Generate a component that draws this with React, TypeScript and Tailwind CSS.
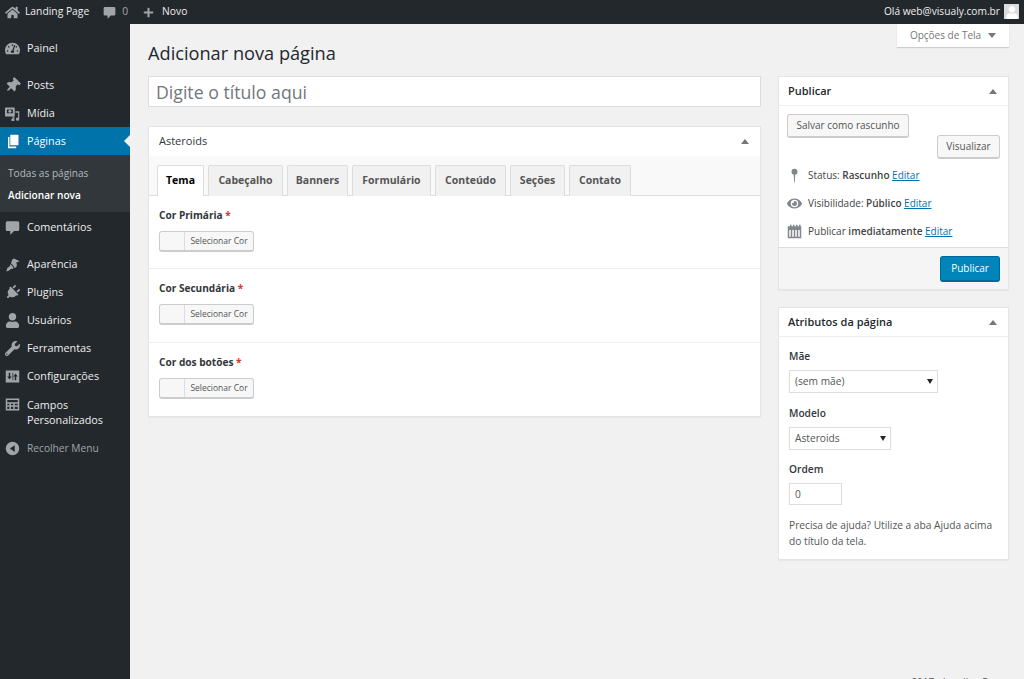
import React from "react";
import { FaHome, FaPlus, FaThumbtack, FaPlug, FaUser, FaWrench, FaEye, FaTachometerAlt } from "react-icons/fa";

const S = ({ children, className = "" }: { children: React.ReactNode; className?: string }) => (
  <svg viewBox="0 0 20 20" fill="currentColor" className={className}>{children}</svg>
);

const Comment = ({ className }: { className?: string }) => (
  <S className={className}>
    <path d="M3 1.500h14a2 2 0 0 1 2 2v9a2 2 0 0 1-2 2h-5l-5 5v-5H3a2 2 0 0 1-2-2v-9a2 2 0 0 1 2-2z" />
  </S>
);
const Brush = ({ className }: { className?: string }) => (
  <S className={className}>
    <path d="M9.500 3.500 12 2l7.500 3.500c-1.500 1-3 1.500-4.500 1.500 .5 1.500 1 3 .5 5.500L13 15c-.5-2-2.500-5-5-6.500z" />
    <path d="M7.500 9.500c1.500 1 3 3 4 5l-1.500 1.500c-1-.5-2-.5-3 .5-1 1.500-3.500 2.500-5.500 2.500 1-1 1-2.500 1.500-4 .5-1.500 2.500-2 3-2.500.5-.5.5-1.500 1.500-3z" />
  </S>
);
const Media = ({ className }: { className?: string }) => (
  <S className={className}>
    <path d="M1 2h11a1 1 0 0 1 1 1v10a1 1 0 0 1-1 1H1a1 1 0 0 1-1-1V3a1 1 0 0 1 1-1zm1.500 2.500v5h8v-5z" fillRule="evenodd" />
    <circle cx="6.500" cy="7" r="2" />
    <path d="M14 7h5v10.500a2.200 2.200 0 1 1-1.500-2V9H14zM9 14h3.500v4.500a2 2 0 1 1-1.500-2V15H9z" />
  </S>
);
const Pages = ({ className }: { className?: string }) => (
  <S className={className}>
    <path d="M7 1h11v14H7z" />
    <path d="M4 4h2v12.500h9V19H4z" />
  </S>
);
const Settings = ({ className }: { className?: string }) => (
  <S className={className}>
    <path fillRule="evenodd" d="M1 2h18v16H1zM5 5v5H3l3 4 3-4H7V5zm8 10v-5h-2l3-4 3 4h-2v5zM10 5h1v10h-1z" />
  </S>
);
const Fields = ({ className }: { className?: string }) => (
  <S className={className}>
    <path fillRule="evenodd" d="M1 2h18v16H1zM3 4v3h14V4zm0 5v2h3V9zm5 0v2h3V9zm5 0v2h4V9zM3 13v3h3v-3zm5 0v3h3v-3zm5 0v3h4v-3z" />
  </S>
);
const Collapse = ({ className }: { className?: string }) => (
  <S className={className}>
    <path fillRule="evenodd" d="M10 1a9 9 0 1 1 0 18 9 9 0 0 1 0-18zm3 4.500L6.500 10l6.500 4.500z" />
  </S>
);
const Pin = ({ className }: { className?: string }) => (
  <S className={className}>
    <circle cx="10" cy="5" r="4" />
    <path d="M9 8h2l-.5 11h-1z" />
  </S>
);
const Calendar = ({ className }: { className?: string }) => (
  <S className={className}>
    <path fillRule="evenodd" d="M1 3h3V1h2v2h2V1h2v2h2V1h2v2h2V1h2v2h1v16H1zm2 5v9h2V8zm4 0v9h2V8zm4 0v9h2V8zm4 0v9h2V8z" />
  </S>
);

type Item = { label: string; icon: React.ReactNode };
const ic = "w-[15px] h-[15px]";
const second: Item[] = [
  { label: "Posts", icon: <FaThumbtack className={ic + " rotate-45"} /> },
  { label: "Mídia", icon: <Media className={ic} /> },
];
const third: Item[] = [
  { label: "Aparência", icon: <Brush className={ic} /> },
  { label: "Plugins", icon: <FaPlug className={ic + " rotate-45"} /> },
  { label: "Usuários", icon: <FaUser className={ic} /> },
  { label: "Ferramentas", icon: <FaWrench className={ic} /> },
  { label: "Configurações", icon: <Settings className={ic} /> },
];

function MenuRow({ item }: { item: Item }) {
  return (
    <div className="flex items-center h-[28px] pt-[1px] text-[#eeeeee] text-[10.800px]">
      <span className="w-[27px] pl-[5px] shrink-0 text-[#a0a5aa]">{item.icon}</span>
      <span>{item.label}</span>
    </div>
  );
}

function Sidebar() {
  return (
    <aside className="w-[130px] shrink-0 bg-[#23282d] pt-[10px]">
      <MenuRow item={{ label: "Painel", icon: <FaTachometerAlt className={ic} /> }} />
      <div className="h-[9px]" />
      {second.map((i) => <MenuRow key={i.label} item={i} />)}
      <div className="relative flex items-center h-[28px] pt-[1px] bg-[#0073aa] text-white text-[10.800px]">
        <span className="w-[27px] pl-[5px] shrink-0"><Pages className={ic} /></span>
        <span>Páginas</span>
        <span className="absolute right-0 top-[8px] w-0 h-0 border-y-[6px] border-y-transparent border-r-[6px] border-r-[#f1f1f1]" />
      </div>
      <div className="bg-[#32373c] h-[57px] pl-[8px] pt-[7px] text-[10.100px]">
        <div className="h-[22px] leading-[22px] text-[#b4b9be]">Todas as páginas</div>
        <div className="h-[22px] leading-[22px] font-semibold text-white">Adicionar nova</div>
      </div>
      <div className="h-[1px]" />
      <MenuRow item={{ label: "Comentários", icon: <Comment className={ic} /> }} />
      <div className="h-[9px]" />
      {third.map((i) => <MenuRow key={i.label} item={i} />)}
      <div className="flex h-[44px] pt-[7px] text-[#eeeeee] text-[10.800px] leading-[15px]">
        <span className="w-[27px] pl-[5px] shrink-0 text-[#a0a5aa]"><Fields className={ic} /></span>
        <span>Campos<br />Personalizados</span>
      </div>
      <div className="flex items-center h-[28px] pt-[1px] text-[#a0a5aa] text-[10.200px]">
        <span className="w-[27px] pl-[5px] shrink-0"><Collapse className={ic} /></span>
        <span>Recolher Menu</span>
      </div>
    </aside>
  );
}

function AdminBar() {
  return (
    <header className="h-[24px] bg-[#23282d] flex items-center justify-between text-[#eeeeee] text-[10.300px] pl-[5px] pr-[5px] shrink-0">
      <div className="flex items-center">
        <FaHome className="w-[15px] h-[15px] text-[#a0a5aa] mr-[5px]" />
        <span className="mr-[14px]">Landing Page</span>
        <Comment className="w-[13px] h-[13px] text-[#a0a5aa] mr-[6px]" />
        <span className="text-[#a0a5aa] mr-[15px]">0</span>
        <FaPlus className="w-[11px] h-[11px] text-[#a0a5aa] mr-[8px]" />
        <span>Novo</span>
      </div>
      <div className="flex items-center">
        <span className="mr-[4px] text-[10.200px]">Olá web@visualy.com.br</span>
        <span className="w-[15px] h-[15px] bg-[#dcdcdc] flex items-end justify-center overflow-hidden">
          <FaUser className="w-[12px] h-[13px] text-white" />
        </span>
      </div>
    </header>
  );
}

const Tri = ({ className = "" }: { className?: string }) => (
  <span className={"w-0 h-0 border-x-[4px] border-x-transparent border-b-[5px] border-b-[#72777c] " + className} />
);

function Box({ title, children }: { title: string; children: React.ReactNode }) {
  return (
    <section className="bg-white border border-[#e5e5e5] shadow-[0_1px_1px_rgba(0,0,0,0.04)]">
      <div className="h-[29px] flex items-center justify-between pl-[9px] pr-[11px] text-[#23282d] text-[11px] font-semibold border-b border-[#eeeeee]">
        <span>{title}</span>
        <Tri />
      </div>
      {children}
    </section>
  );
}

const tabs = [
  ["Tema", "w-[47px]"],
  ["Cabeçalho", "w-[75px]"],
  ["Banners", "w-[61px]"],
  ["Formulário", "w-[79px]"],
  ["Conteúdo", "w-[71px]"],
  ["Seções", "w-[55px]"],
  ["Contato", "w-[62px]"],
];

function ColorField({ label, h, last }: { label: string; h: string; last?: boolean }) {
  return (
    <div className={h + " pl-[10px] pt-[12px] " + (last ? "" : "border-b border-[#eeeeee]")}>
      <div className="text-[10.100px] font-bold text-[#32373c] leading-[15px]">
        {label} <span className="text-[#dc3232]">*</span>
      </div>
      <div className="mt-[8px] w-[95px] h-[21px] flex border border-[#cccccc] border-b-[2px] rounded-[3px] bg-[#f7f7f7] overflow-hidden">
        <span className="w-[25px] border-r border-[#dddddd] shrink-0" />
        <span className="flex-1 text-center text-[8.500px] leading-[18px] text-[#555555] whitespace-nowrap">Selecionar Cor</span>
      </div>
    </div>
  );
}

function Button({ children, className = "" }: { children: React.ReactNode; className?: string }) {
  return (
    <div className={"h-[24px] flex items-center justify-center border border-[#cccccc] border-b-[2px] rounded-[3px] bg-[#f7f7f7] text-[#555555] text-[10px] " + className}>
      {children}
    </div>
  );
}

const Link = ({ children }: { children: React.ReactNode }) => (
  <span className="text-[#0073aa] underline">{children}</span>
);

function StatusRow({ icon, children }: { icon: React.ReactNode; children: React.ReactNode }) {
  return (
    <div className="flex items-center h-[28px] text-[10px] text-[#444444]">
      <span className="w-[15px] shrink-0 flex justify-center text-[#82878c] mr-[6px]">{icon}</span>
      <span className="whitespace-nowrap">{children}</span>
    </div>
  );
}

function Publish() {
  return (
    <Box title="Publicar">
      <div className="px-[8px] pt-[8px] h-[141px]">
        <Button className="w-[122px]">Salvar como rascunho</Button>
        <div className="flex justify-end mt-[-3px]">
          <Button className="w-[63px]">Visualizar</Button>
        </div>
        <div className="mt-[2px]">
          <StatusRow icon={<Pin className="w-[15px] h-[15px]" />}>Status: <b className="font-semibold">Rascunho</b> <Link>Editar</Link></StatusRow>
          <StatusRow icon={<FaEye className="w-[15px] h-[15px]" />}>Visibilidade: <b className="font-semibold">Público</b> <Link>Editar</Link></StatusRow>
          <StatusRow icon={<Calendar className="w-[15px] h-[15px]" />}>Publicar <b className="font-semibold">imediatamente</b> <Link>Editar</Link></StatusRow>
        </div>
      </div>
      <div className="h-[42px] bg-[#f5f5f5] border-t border-[#dddddd] flex items-center justify-end pr-[8px]">
        <div className="w-[60px] h-[26px] flex items-center justify-center bg-[#0085ba] border border-[#006799] border-b-[2px] rounded-[3px] text-white text-[10px]">Publicar</div>
      </div>
    </Box>
  );
}

function FakeSelect({ w, label }: { w: string; label: string }) {
  return (
    <div className={w + " h-[23px] border border-[#dddddd] bg-white flex items-center justify-between pl-[5px] pr-[4px] text-[10.200px] text-[#555555]"}>
      <span>{label}</span>
      <span className="w-0 h-0 border-x-[3px] border-x-transparent border-t-[5px] border-t-[#23282d]" />
    </div>
  );
}

function Attributes() {
  return (
    <Box title="Atributos da página">
      <div className="pl-[10px] pr-[8px] text-[10.200px] text-[#32373c] h-[222px] pt-[11px]">
        <div className="font-semibold leading-[16px]">Mãe</div>
        <div className="mt-[6px]"><FakeSelect w="w-[149px]" label="(sem mãe)" /></div>
        <div className="font-semibold leading-[16px] mt-[12px]">Modelo</div>
        <div className="mt-[6px]"><FakeSelect w="w-[102px]" label="Asteroids" /></div>
        <div className="font-semibold leading-[16px] mt-[11px]">Ordem</div>
        <input readOnly value="0" className="mt-[6px] w-[53px] h-[22px] border border-[#dddddd] pl-[5px] outline-none block text-[#555555]" />
        <p className="mt-[13px] leading-[15.500px] text-[#555555]">Precisa de ajuda? Utilize a aba Ajuda acima do título da tela.</p>
      </div>
    </Box>
  );
}

export default function App() {
  return (
    <div className="h-[679px] w-[1024px] overflow-hidden flex flex-col bg-[#f1f1f1] font-['Open_Sans',sans-serif]">
      <AdminBar />
      <div className="flex flex-1 min-h-0">
        <Sidebar />
        <main className="flex-1 pl-[18px] pr-[15px] flex flex-col">
          <div className="flex justify-between items-start h-[52px] shrink-0">
            <h1 className="text-[18.200px] text-[#23282d] mt-[17px] leading-[24px]">Adicionar nova página</h1>
            <div className="w-[112px] h-[23px] bg-white shadow-[0_1px_1px_rgba(0,0,0,0.15)] flex items-center justify-center gap-[7px] text-[10px] text-[#72777c]">
              <span>Opções de Tela</span>
              <span className="w-0 h-0 border-x-[4px] border-x-transparent border-t-[5px] border-t-[#72777c]" />
            </div>
          </div>
          <div className="flex gap-[17px] flex-1 min-h-0">
            <div className="w-[613px] shrink-0">
              <input
                placeholder="Digite o título aqui"
                className="w-full h-[31px] bg-white border border-[#dddddd] px-[7px] pt-[1px] text-[17.700px] outline-none placeholder:text-[#72777c]"
              />
              <section className="mt-[19px] bg-white border border-[#e5e5e5] shadow-[0_1px_1px_rgba(0,0,0,0.04)]">
                <div className="h-[29px] flex items-center justify-between pl-[10px] pr-[11px] text-[11px] text-[#32373c] font-medium">
                  <span>Asteroids</span>
                  <Tri />
                </div>
                <div className="h-[40px] bg-[#f9f9f9] border-b border-[#dddddd] pl-[8px] pt-[9px] flex gap-[4px] items-start">
                  {tabs.map(([t, w], i) => (
                    <div
                      key={t}
                      className={
                        w + " h-[31px] shrink-0 flex items-center justify-center border border-b-0 text-[10.500px] font-bold rounded-t-[2px] " +
                        (i === 0 ? "bg-white border-[#dddddd] text-black" : "bg-[#f1f1f1] border-[#dddddd] text-[#555555]")
                      }
                    >
                      {t}
                    </div>
                  ))}
                </div>
                <ColorField label="Cor Primária" h="h-[73px]" />
                <ColorField label="Cor Secundária" h="h-[74px]" />
                <ColorField label="Cor dos botões" h="h-[73px]" last />
              </section>
            </div>
            <div className="w-[231px] shrink-0 flex flex-col gap-[17px]">
              <Publish />
              <Attributes />
            </div>
          </div>
          <div className="h-[8px] shrink-0 flex justify-end text-[10px] text-[#555555] leading-[14px] whitespace-nowrap pt-[4px]">
            <span className="mr-[4px]">2017 - Landing Page</span>
          </div>
        </main>
      </div>
    </div>
  );
}
